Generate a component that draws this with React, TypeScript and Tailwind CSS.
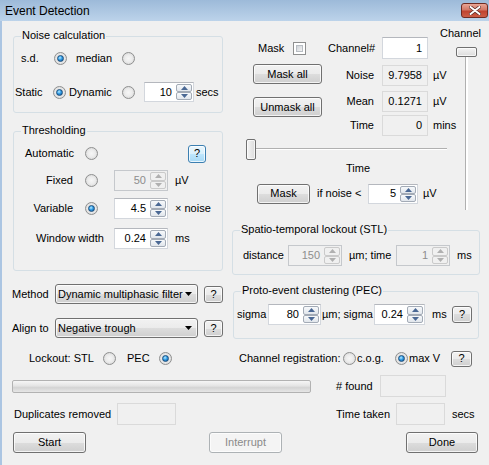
import React from 'react';

type SpinProps = { value: string; w: string; h?: string; disabled?: boolean };

function Arrow({ up, disabled }: { up?: boolean; disabled?: boolean }) {
  return (
    <svg width="7" height="4" viewBox="0 0 7 4">
      <path d={up ? 'M0 4 L3.5 0 L7 4 Z' : 'M0 0 L7 0 L3.5 4 Z'} fill={disabled ? '#b0b0b0' : '#4a6894'} />
    </svg>
  );
}

function SpinBtn({ up, disabled }: { up?: boolean; disabled?: boolean }) {
  return (
    <div
      className={`flex-1 flex items-center justify-center rounded-[2px] border ${
        disabled
          ? 'border-[#cacaca] bg-[#f0f0f0]'
          : 'border-[#a3abb6] bg-[linear-gradient(#f7f9fb,#e1e6ec)]'
      }`}
    >
      <Arrow up={up} disabled={disabled} />
    </div>
  );
}

function Spin({ value, w, h = 'h-[21px]', disabled }: SpinProps) {
  return (
    <div
      className={`${w} ${h} shrink-0 flex border ${
        disabled
          ? 'border-[#c5c8cc] bg-[#f0f0f0] text-[#8d8d8d]'
          : 'border-[#d3d7dd] border-t-[#b4b7bd] bg-white'
      }`}
    >
      <div className="flex-1 flex items-center justify-end pr-[3px]">{value}</div>
      <div className="w-[18px] flex flex-col p-[1px]">
        <SpinBtn up disabled={disabled} />
        <SpinBtn disabled={disabled} />
      </div>
    </div>
  );
}

function Radio({ checked }: { checked?: boolean }) {
  return (
    <div className="w-[13px] h-[13px] shrink-0 rounded-full border border-[#8e8f8f] bg-[radial-gradient(circle_at_50%_50%,#f6f6f6_0%,#ececec_45%,#cfcfcf_100%)] flex items-center justify-center">
      {checked && (
        <div className="w-[7px] h-[7px] rounded-full border border-[#1d4f7c] bg-[radial-gradient(circle_at_40%_35%,#b9ecff_0%,#2f9be6_45%,#0c4c8a_100%)]" />
      )}
    </div>
  );
}

function Check() {
  return (
    <div className="w-[13px] h-[13px] shrink-0 border border-[#8e8f8f] bg-white p-[2px]">
      <div className="w-full h-full border border-[#b8bdc3] bg-[linear-gradient(135deg,#cfd3d8,#f3f3f3)]" />
    </div>
  );
}

type BtnProps = { children: React.ReactNode; w: string; h?: string; disabled?: boolean; hover?: boolean };

function Btn({ children, w, h = 'h-[21px]', disabled, hover }: BtnProps) {
  return (
    <div
      className={`${w} ${h} shrink-0 flex items-center justify-center rounded-[3px] border ${
        disabled
          ? 'border-[#adb2b5] bg-[#f4f4f4] text-[#8a8a8a]'
          : hover
          ? 'border-[#3c7fb1] bg-[linear-gradient(#eaf6fd_0%,#d9f0fc_50%,#bee6fd_50%,#a7d9f5_100%)]'
          : 'border-[#707070] bg-[linear-gradient(#f2f2f2_0%,#ebebeb_50%,#dddddd_50%,#cfcfcf_100%)]'
      } shadow-[inset_0_0_0_1px_rgba(255,255,255,0.75)]`}
    >
      {children}
    </div>
  );
}

function Combo({ text }: { text: string }) {
  return (
    <div className="w-[143px] h-[20px] shrink-0 flex items-center rounded-[3px] border border-[#707070] bg-[linear-gradient(#f2f2f2_0%,#ebebeb_50%,#dddddd_50%,#cfcfcf_100%)] shadow-[inset_0_0_0_1px_rgba(255,255,255,0.75)] pl-[2px]">
      <span className="flex-1 whitespace-nowrap overflow-hidden">{text}</span>
      <svg width="7" height="4" viewBox="0 0 7 4" className="mr-[5px] ml-[2px] shrink-0">
        <path d="M0 0 L7 0 L3.5 4 Z" fill="#000" />
      </svg>
    </div>
  );
}

function RO({ value, w, h = 'h-[21px]', white }: { value?: string; w: string; h?: string; white?: boolean }) {
  return (
    <div
      className={`${w} ${h} shrink-0 flex items-center justify-end pr-[5px] border ${
        white ? 'border-[#d3d7dd] border-t-[#b4b7bd] bg-white' : 'border-[#dadada] bg-[#f0f0f0]'
      }`}
    >
      {value}
    </div>
  );
}

function Group({ title, className, children }: { title: string; className: string; children: React.ReactNode }) {
  return (
    <div className={`relative shrink-0 rounded-[3px] border border-[#d5dfe5] ${className}`}>
      <span className="absolute top-[-8px] left-[7px] px-[1px] bg-[#f0f0f0] whitespace-nowrap">{title}</span>
      {children}
    </div>
  );
}

function Help({ h = 'h-[17px]', w = 'w-[19px]', hover }: { h?: string; w?: string; hover?: boolean }) {
  return (
    <Btn w={w} h={h} hover={hover}>
      ?
    </Btn>
  );
}

export default function App() {
  return (
    <div className="w-[489px] h-[465px] overflow-hidden bg-[#f0f0f0] text-black text-[11px] leading-[13px] font-['Liberation_Sans',Arial,sans-serif] flex flex-col">
      {/* Title bar */}
      <div className="h-[21px] shrink-0 flex items-center justify-between pl-[5px] pr-[1px] bg-[linear-gradient(#9dbad9,#bcd3ea)]">
        <span className="text-[12px] leading-[14px]">Event Detection</span>
        <div className="w-[27px] h-[15px] rounded-[3px] border border-[#6f2b22] bg-[linear-gradient(#e9a595_0%,#d27866_45%,#c0432f_55%,#cc5e47_100%)] flex items-center justify-center">
          <svg width="12" height="9" viewBox="0 0 12 9">
            <path
              d="M1.5 1 L10.5 8 M10.5 1 L1.5 8"
              stroke="#5a2a25"
              strokeWidth="3.4"
              strokeLinecap="round"
            />
            <path d="M1.5 1 L10.5 8 M10.5 1 L1.5 8" stroke="#ffffff" strokeWidth="2" strokeLinecap="round" />
          </svg>
        </div>
      </div>

      {/* Body */}
      <div className="flex-1 flex flex-col border-l-[2px] border-[#abc5e2]">
        {/* Top section */}
        <div className="h-[346px] shrink-0 flex">
          {/* Left column */}
          <div className="ml-[11px] w-[210px] shrink-0 flex flex-col">
            <Group title="Noise calculation" className="mt-[15px] h-[77px] w-[210px]">
              <div className="mt-[11px] h-[20px] flex items-center">
                <span className="ml-[7px] w-[33px]">s.d.</span>
                <Radio checked />
                <span className="ml-[9px] w-[46px]">median</span>
                <Radio />
              </div>
              <div className="mt-[14px] h-[20px] flex items-center">
                <span className="ml-[1px] w-[38px]">Static</span>
                <Radio checked />
                <span className="ml-[3px] w-[53px]">Dynamic</span>
                <Radio />
                <div className="ml-[9px]">
                  <Spin value="10" w="w-[50px]" h="h-[20px]" />
                </div>
                <span className="ml-[2px]">secs</span>
              </div>
            </Group>

            <Group title="Thresholding" className="mt-[18px] h-[140px] w-[210px]">
              <div className="mt-[11px] h-[21px] flex items-center">
                <span className="ml-[11px] w-[60px]">Automatic</span>
                <Radio />
                <div className="ml-[90px]">
                  <Help w="w-[18px]" h="h-[18px]" hover />
                </div>
              </div>
              <div className="mt-[6px] h-[21px] flex items-center">
                <span className="w-[59px] text-right">Fixed</span>
                <div className="ml-[12px]">
                  <Radio />
                </div>
                <div className="ml-[16px]">
                  <Spin value="50" w="w-[54px]" disabled />
                </div>
                <span className="ml-[7px]">µV</span>
              </div>
              <div className="mt-[7px] h-[21px] flex items-center">
                <span className="w-[59px] text-right">Variable</span>
                <div className="ml-[12px]">
                  <Radio checked />
                </div>
                <div className="ml-[16px]">
                  <Spin value="4.5" w="w-[54px]" />
                </div>
                <span className="ml-[7px]">× noise</span>
              </div>
              <div className="mt-[9px] h-[21px] flex items-center">
                <span className="ml-[22px] w-[78px]">Window width</span>
                <Spin value="0.24" w="w-[54px]" />
                <span className="ml-[7px]">ms</span>
              </div>
            </Group>

            <div className="mt-[13px] h-[20px] flex items-center">
              <span className="ml-[-1px] w-[43px]">Method</span>
              <Combo text="Dynamic multiphasic filter" />
              <div className="ml-[6px]">
                <Help />
              </div>
            </div>
            <div className="mt-[14px] h-[20px] flex items-center">
              <span className="ml-[-1px] w-[43px]">Align to</span>
              <Combo text="Negative trough" />
              <div className="ml-[6px]">
                <Help />
              </div>
            </div>
            <div className="mt-[13px] h-[14px] flex items-center">
              <span className="ml-[16px] w-[74px] whitespace-nowrap">Lockout: STL</span>
              <Radio />
              <span className="ml-[11px] w-[32px]">PEC</span>
              <Radio checked />
            </div>
          </div>

          {/* Right column */}
          <div className="ml-[9px] w-[249px] shrink-0 flex flex-col">
            <div className="h-[189px] shrink-0 flex">
              {/* left sub */}
              <div className="w-[208px] shrink-0 flex flex-col">
                <div className="mt-[16px] h-[22px] flex items-center">
                  <span className="ml-[26px] w-[35px]">Mask</span>
                  <Check />
                  <span className="ml-[22px] w-[54px]">Channel#</span>
                  <RO value="1" w="w-[46px]" h="h-[22px]" white />
                </div>
                <div className="flex">
                  <div className="ml-[21px] w-[69px] shrink-0 flex flex-col">
                    <div className="mt-[5px]">
                      <Btn w="w-[69px]" h="h-[20px]">Mask all</Btn>
                    </div>
                    <div className="mt-[13px]">
                      <Btn w="w-[69px]" h="h-[20px]">Unmask all</Btn>
                    </div>
                  </div>
                  <div className="flex flex-col">
                    <div className="mt-[6px] h-[21px] flex items-center">
                      <span className="w-[52px] text-right">Noise</span>
                      <div className="ml-[8px]">
                        <RO value="9.7958" w="w-[46px]" />
                      </div>
                      <span className="ml-[5px]">µV</span>
                    </div>
                    <div className="mt-[5px] h-[21px] flex items-center">
                      <span className="w-[52px] text-right">Mean</span>
                      <div className="ml-[8px]">
                        <RO value="0.1271" w="w-[46px]" />
                      </div>
                      <span className="ml-[5px]">µV</span>
                    </div>
                    <div className="mt-[3px] h-[21px] flex items-center">
                      <span className="w-[52px] text-right">Time</span>
                      <div className="ml-[8px]">
                        <RO value="0" w="w-[46px]" />
                      </div>
                      <span className="ml-[5px]">mins</span>
                    </div>
                  </div>
                </div>
                {/* time slider */}
                <div className="mt-[3px] ml-[14px] w-[201px] h-[21px] shrink-0 relative">
                  <div className="absolute left-[4px] right-0 top-[9px] h-[2px] border-t border-[#b0b0b0] bg-white" />
                  <div className="absolute left-0 top-0 w-[10px] h-[21px] rounded-[2px] border border-[#707070] bg-[linear-gradient(90deg,#f4f4f4,#dcdcdc)] shadow-[inset_0_0_0_1px_rgba(255,255,255,0.7)]" />
                </div>
                <div className="mt-[1px] ml-[114px] h-[14px] flex items-center">Time</div>
                <div className="mt-[8px] h-[21px] flex items-center">
                  <div className="ml-[25px]">
                    <Btn w="w-[53px]" h="h-[20px]">Mask</Btn>
                  </div>
                  <span className="ml-[7px] w-[51px] whitespace-nowrap">if noise &lt;</span>
                  <Spin value="5" w="w-[50px]" h="h-[20px]" />
                  <span className="ml-[5px]">µV</span>
                </div>
              </div>
              {/* right sub: channel slider */}
              <div className="w-[41px] shrink-0 flex flex-col">
                <div className="mt-[5px] h-[14px] flex items-center justify-center">Channel</div>
                <div className="mt-[7px] ml-[16px] w-[21px] h-[163px] relative">
                  <div className="absolute left-[9px] top-[4px] bottom-0 w-[3px] border-l border-[#b0b0b0] bg-white" />
                  <div className="absolute left-0 top-0 w-[21px] h-[10px] rounded-[2px] border border-[#707070] bg-[linear-gradient(#f4f4f4,#dcdcdc)] shadow-[inset_0_0_0_1px_rgba(255,255,255,0.7)]" />
                </div>
              </div>
            </div>

            <Group title="Spatio-temporal lockout (STL)" className="mt-[20px] h-[45px] w-[248px]">
              <div className="mt-[14px] h-[21px] flex items-center">
                <span className="ml-[10px] w-[45px]">distance</span>
                <Spin value="150" w="w-[54px]" disabled />
                <span className="ml-[7px] w-[47px] whitespace-nowrap">µm; time</span>
                <Spin value="1" w="w-[54px]" disabled />
                <span className="ml-[7px]">ms</span>
              </div>
            </Group>

            <Group title="Proto-event clustering (PEC)" className="mt-[16px] ml-[1px] h-[48px] w-[246px]">
              <div className="mt-[12px] h-[21px] flex items-center">
                <span className="ml-[3px] w-[31px]">sigma</span>
                <Spin value="80" w="w-[53px]" />
                <span className="ml-[1px] w-[52px] whitespace-nowrap">µm; sigma</span>
                <Spin value="0.24" w="w-[51px]" />
                <span className="ml-[7px] w-[20px]">ms</span>
                <Help w="w-[20px]" />
              </div>
            </Group>

            <div className="mt-[11px] h-[17px] flex items-center">
              <span className="ml-[7px] w-[104px] whitespace-nowrap">Channel registration:</span>
              <Radio />
              <span className="ml-[1px] w-[38px]">c.o.g.</span>
              <Radio checked />
              <span className="ml-[1px] w-[42px] whitespace-nowrap">max V</span>
              <Help w="w-[21px]" h="h-[16px]" />
            </div>
          </div>
        </div>

        {/* Bottom section */}
        <div className="mt-[8px] h-[22px] flex items-center">
          <div className="ml-[10px] w-[299px] h-[13px] shrink-0 rounded-[2px] border border-[#b2b2b2] bg-[linear-gradient(#f6f6f6_0%,#e4e4e4_45%,#d4d4d4_60%,#e6e6e6_100%)]" />
          <span className="ml-[25px] w-[44px] whitespace-nowrap"># found</span>
          <RO w="w-[66px]" h="h-[22px]" />
        </div>
        <div className="mt-[6px] h-[22px] flex items-center">
          <span className="ml-[12px] w-[103px] whitespace-nowrap">Duplicates removed</span>
          <RO w="w-[59px]" h="h-[22px]" />
          <span className="ml-[160px] w-[60px] whitespace-nowrap">Time taken</span>
          <RO w="w-[49px]" h="h-[22px]" />
          <span className="ml-[7px]">secs</span>
        </div>
        <div className="mt-[7px] h-[21px] flex items-center">
          <div className="ml-[11px]">
            <Btn w="w-[73px]">Start</Btn>
          </div>
          <div className="ml-[123px]">
            <Btn w="w-[73px]" disabled>
              Interrupt
            </Btn>
          </div>
          <div className="ml-[124px]">
            <Btn w="w-[72px]">Done</Btn>
          </div>
        </div>
      </div>
    </div>
  );
}
